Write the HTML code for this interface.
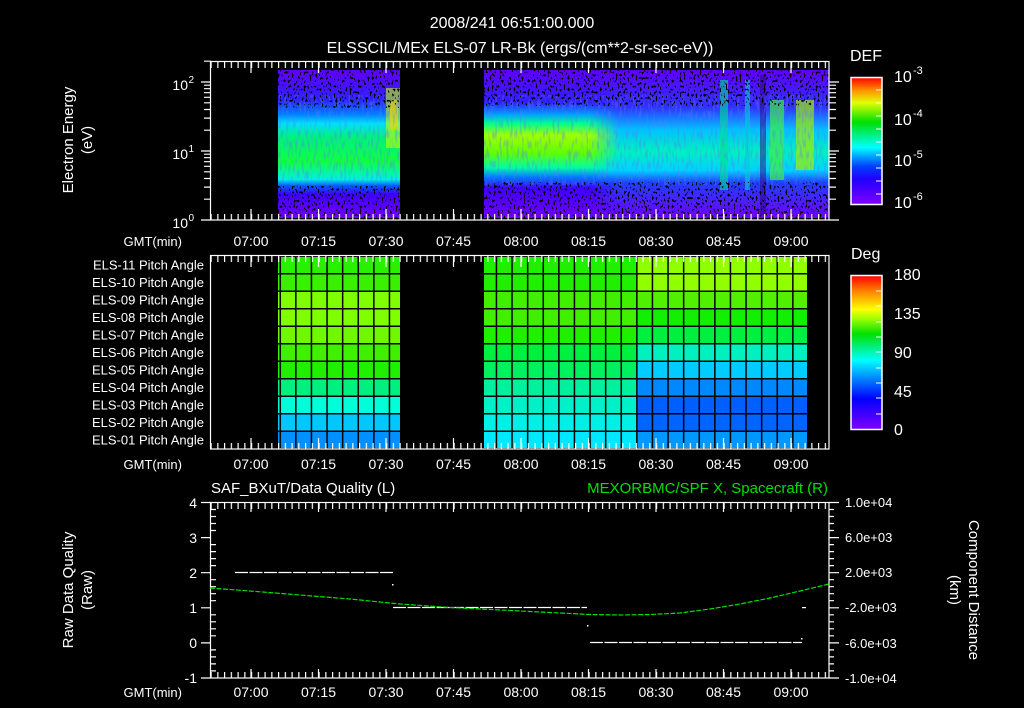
<!DOCTYPE html>
<html><head><meta charset="utf-8"><style>
html,body{margin:0;padding:0;background:#000;width:1024px;height:708px;overflow:hidden}
svg{display:block}
text{font-family:"Liberation Sans",sans-serif;fill:#fff}
</style></head><body>
<svg width="1024" height="708" viewBox="0 0 1024 708" xmlns="http://www.w3.org/2000/svg">
<defs>
<pattern id="tk" x="210.5" y="0" width="6.75" height="708" patternUnits="userSpaceOnUse"><rect x="0" y="0" width="1.2" height="708" fill="#fff"/></pattern>
<pattern id="vgA" x="279.5" y="0" width="15.6" height="708" patternUnits="userSpaceOnUse"><rect x="0" y="0" width="1.5" height="708" fill="#000"/></pattern>
<pattern id="vgB" x="480.1" y="0" width="15.6" height="708" patternUnits="userSpaceOnUse"><rect x="0" y="0" width="1.5" height="708" fill="#000"/></pattern>
<pattern id="hg" x="0" y="255.5" width="10" height="17.5" patternUnits="userSpaceOnUse"><rect x="0" y="0" width="10" height="1.5" fill="#000"/></pattern>
<linearGradient id="cb1" x1="0" y1="1" x2="0" y2="0">
<stop offset="0" stop-color="#8000ff"/><stop offset="0.2" stop-color="#2000ff"/><stop offset="0.3" stop-color="#0040ff"/><stop offset="0.45" stop-color="#00ffff"/><stop offset="0.65" stop-color="#00e000"/><stop offset="0.8" stop-color="#e0ff00"/><stop offset="0.9" stop-color="#ff9000"/><stop offset="1" stop-color="#ff0000"/></linearGradient>
<linearGradient id="cb2" x1="0" y1="1" x2="0" y2="0">
<stop offset="0" stop-color="#8000ff"/><stop offset="0.2" stop-color="#0000ff"/><stop offset="0.45" stop-color="#00ffff"/><stop offset="0.62" stop-color="#00e000"/><stop offset="0.72" stop-color="#a0ff00"/><stop offset="0.78" stop-color="#ffff00"/><stop offset="0.9" stop-color="#ff8000"/><stop offset="1" stop-color="#ff0000"/></linearGradient>
<linearGradient id="sA" x1="0" y1="0" x2="0" y2="1">
<stop offset="0" stop-color="#6000ff"/><stop offset="0.2" stop-color="#3020ff"/><stop offset="0.3" stop-color="#0080ff"/><stop offset="0.36" stop-color="#00e0ff"/><stop offset="0.45" stop-color="#00f080"/><stop offset="0.62" stop-color="#10ff40"/><stop offset="0.74" stop-color="#00f0e0"/><stop offset="0.78" stop-color="#0060ff"/><stop offset="0.84" stop-color="#4000ff"/><stop offset="1" stop-color="#7000ff"/></linearGradient>
<linearGradient id="sB" x1="0" y1="0" x2="0" y2="1">
<stop offset="0" stop-color="#6000ff"/><stop offset="0.22" stop-color="#3020ff"/><stop offset="0.3" stop-color="#00a0ff"/><stop offset="0.36" stop-color="#00ff90"/><stop offset="0.44" stop-color="#a0ff00"/><stop offset="0.56" stop-color="#60ff00"/><stop offset="0.66" stop-color="#00ffa0"/><stop offset="0.72" stop-color="#0080ff"/><stop offset="0.8" stop-color="#4000ff"/><stop offset="1" stop-color="#7000ff"/></linearGradient>
<linearGradient id="sC" x1="0" y1="0" x2="0" y2="1">
<stop offset="0" stop-color="#6000ff"/><stop offset="0.25" stop-color="#3030ff"/><stop offset="0.4" stop-color="#00c0ff"/><stop offset="0.55" stop-color="#00f0c0"/><stop offset="0.68" stop-color="#00d0ff"/><stop offset="0.76" stop-color="#2040ff"/><stop offset="1" stop-color="#7000ff"/></linearGradient>
<linearGradient id="fadeC" x1="0" y1="0" x2="1" y2="0"><stop offset="0" stop-color="#fff" stop-opacity="0"/><stop offset="0.12" stop-color="#fff" stop-opacity="1"/></linearGradient>
<mask id="mC"><rect x="590" y="60" width="239" height="160" fill="url(#fadeC)"/></mask>
<filter id="sp" x="0" y="0" width="1" height="1"><feTurbulence type="fractalNoise" baseFrequency="0.5 0.35" numOctaves="1" seed="5"/><feColorMatrix type="matrix" values="0 0 0 0 0  0 0 0 0 0  0 0 0 0 0  -12 0 0 0 5"/></filter>
<filter id="sp2" x="0" y="0" width="1" height="1"><feTurbulence type="fractalNoise" baseFrequency="0.45 0.1" numOctaves="1" seed="9"/><feColorMatrix type="matrix" values="0 0 0 0 0.1  0 0 0 0 0.2  0 0 0 0 1  -6 0 0 0 3"/></filter>
</defs>

<text x="512" y="28" font-size="16" text-anchor="middle">2008/241 06:51:00.000</text>
<text x="520" y="53" font-size="16" text-anchor="middle">ELSSCIL/MEx ELS-07 LR-Bk  (ergs/(cm**2-sr-sec-eV))</text>

<!-- PANEL 1 spectrogram -->
<rect x="278" y="70" width="122" height="148" fill="url(#sA)"/>
<rect x="386" y="88" width="14" height="60" fill="#c0ff00" opacity="0.6"/>
<rect x="390" y="100" width="8" height="30" fill="#ffd000" opacity="0.6"/>
<rect x="484" y="70" width="345" height="148" fill="url(#sB)"/>
<rect x="590" y="70" width="239" height="148" fill="url(#sC)" mask="url(#mC)"/>
<rect x="720" y="80" width="8" height="110" fill="#00e090" opacity="0.6"/>
<rect x="745" y="80" width="5" height="110" fill="#00d0d0" opacity="0.6"/>
<rect x="770" y="100" width="14" height="80" fill="#40f040" opacity="0.7"/>
<rect x="796" y="100" width="18" height="70" fill="#a0f000" opacity="0.7"/>
<rect x="760" y="75" width="6" height="140" fill="#300080" opacity="0.5"/>
<rect x="278" y="95" width="122" height="90" fill="#000" filter="url(#sp2)" opacity="0.35"/>
<rect x="484" y="95" width="345" height="90" fill="#000" filter="url(#sp2)" opacity="0.35"/>
<rect x="278" y="70" width="122" height="38" fill="#000" filter="url(#sp)"/>
<rect x="278" y="186" width="122" height="32" fill="#000" filter="url(#sp)"/>
<rect x="484" y="70" width="345" height="36" fill="#000" filter="url(#sp)"/>
<rect x="484" y="182" width="345" height="36" fill="#000" filter="url(#sp)"/>

<rect x="210.5" y="61.5" width="618.5" height="158.5" fill="none" stroke="#fff" stroke-width="1.2"/>
<rect x="210.5" y="62" width="618" height="6" fill="url(#tk)"/>
<rect x="210.5" y="214" width="618" height="6" fill="url(#tk)"/>
<g stroke="#fff" stroke-width="1.2">
<path d="M251 62v11M318.5 62v11M386 62v11M453.5 62v11M521 62v11M588.5 62v11M656 62v11M723.5 62v11M791 62v11M251 220v-11M318.5 220v-11M386 220v-11M453.5 220v-11M521 220v-11M588.5 220v-11M656 220v-11M723.5 220v-11M791 220v-11"/>
<path d="M201 220h10M201 151h10M201 82h10M204 199.2h7M204 187.1h7M204 178.5h7M204 171.8h7M204 166.3h7M204 161.7h7M204 157.7h7M204 154.2h7M204 130.2h7M204 118.1h7M204 109.5h7M204 102.8h7M204 97.3h7M204 92.7h7M204 88.7h7M204 85.2h7M204 61.2h7"/>
<path d="M829 220h10M829 151h10M829 82h10M829 199.2h7M829 187.1h7M829 178.5h7M829 171.8h7M829 166.3h7M829 161.7h7M829 157.7h7M829 154.2h7M829 130.2h7M829 118.1h7M829 109.5h7M829 102.8h7M829 97.3h7M829 92.7h7M829 88.7h7M829 85.2h7"/>
</g>
<g font-size="14" text-anchor="end">
<text x="188" y="228">10</text><text x="194" y="221" font-size="10">0</text>
<text x="188" y="159">10</text><text x="194" y="152" font-size="10">1</text>
<text x="188" y="90">10</text><text x="194" y="83" font-size="10">2</text>
</g>
<text transform="translate(73,140) rotate(-90)" font-size="15" text-anchor="middle">Electron Energy</text>
<text transform="translate(92,140) rotate(-90)" font-size="15" text-anchor="middle">(eV)</text>
<g font-size="14" text-anchor="middle">
<text x="251" y="246">07:00</text><text x="318.5" y="246">07:15</text><text x="386" y="246">07:30</text><text x="453.5" y="246">07:45</text><text x="521" y="246">08:00</text><text x="588.5" y="246">08:15</text><text x="656" y="246">08:30</text><text x="723.5" y="246">08:45</text><text x="791" y="246">09:00</text>
</g>
<text x="182" y="246" font-size="13" text-anchor="end">GMT(min)</text>
<text x="850" y="61" font-size="16">DEF</text>
<rect x="851" y="77.5" width="31" height="127" fill="url(#cb1)" stroke="#fff" stroke-width="1.5"/>
<g stroke="#fff" stroke-width="1"><path d="M876 90h6M876 103h6M876 116h6M876 129h6M876 142h6M876 155h6M876 168h6M876 181h6M876 194h6"/></g>
<g font-size="16"><text x="894" y="82">10</text><text x="913" y="74" font-size="11">-3</text>
<text x="894" y="125">10</text><text x="913" y="117" font-size="11">-4</text>
<text x="894" y="166">10</text><text x="913" y="158" font-size="11">-5</text>
<text x="894" y="208">10</text><text x="913" y="200" font-size="11">-6</text></g>

<!-- PANEL 2 -->
<g>
<rect x="278" y="256" width="122" height="17.5" fill="#28f000"/>
<rect x="278" y="273.5" width="122" height="17.5" fill="#38f000"/>
<rect x="278" y="291" width="122" height="17.5" fill="#80ff00"/>
<rect x="278" y="308.5" width="122" height="17.5" fill="#80ff00"/>
<rect x="278" y="326" width="122" height="17.5" fill="#70f800"/>
<rect x="278" y="343.5" width="122" height="17.5" fill="#40f000"/>
<rect x="278" y="361" width="122" height="17.5" fill="#20f000"/>
<rect x="278" y="378.5" width="122" height="17.5" fill="#00f080"/>
<rect x="278" y="396" width="122" height="17.5" fill="#00ffd8"/>
<rect x="278" y="413.5" width="122" height="17.5" fill="#00c8ff"/>
<rect x="278" y="431" width="122" height="18" fill="#0090ff"/>
<rect x="484" y="256" width="153" height="17.5" fill="#20f000"/>
<rect x="484" y="273.5" width="153" height="17.5" fill="#20f000"/>
<rect x="484" y="291" width="153" height="17.5" fill="#40f000"/>
<rect x="484" y="308.5" width="153" height="17.5" fill="#40f000"/>
<rect x="484" y="326" width="153" height="17.5" fill="#20f000"/>
<rect x="484" y="343.5" width="153" height="17.5" fill="#00f040"/>
<rect x="484" y="361" width="153" height="17.5" fill="#00f060"/>
<rect x="484" y="378.5" width="153" height="17.5" fill="#00f0a0"/>
<rect x="484" y="396" width="153" height="17.5" fill="#00f0c8"/>
<rect x="484" y="413.5" width="153" height="17.5" fill="#00f0e8"/>
<rect x="484" y="431" width="153" height="18" fill="#00e8ff"/>
<rect x="637" y="256" width="170" height="17.5" fill="#90ff00"/>
<rect x="637" y="273.5" width="170" height="17.5" fill="#90ff00"/>
<rect x="637" y="291" width="170" height="17.5" fill="#50f000"/>
<rect x="637" y="308.5" width="170" height="17.5" fill="#10f000"/>
<rect x="637" y="326" width="170" height="17.5" fill="#00f040"/>
<rect x="637" y="343.5" width="170" height="17.5" fill="#00f0c0"/>
<rect x="637" y="361" width="170" height="17.5" fill="#00ccff"/>
<rect x="637" y="378.5" width="170" height="17.5" fill="#0088ff"/>
<rect x="637" y="396" width="170" height="17.5" fill="#0060ff"/>
<rect x="637" y="413.5" width="170" height="17.5" fill="#0064ff"/>
<rect x="637" y="431" width="170" height="18" fill="#0098ff"/>
<rect x="278" y="256" width="122" height="193" fill="url(#vgA)"/>
<rect x="484" y="256" width="323" height="193" fill="url(#vgB)"/>
<rect x="278" y="256" width="122" height="193" fill="url(#hg)"/>
<rect x="484" y="256" width="323" height="193" fill="url(#hg)"/>
</g>
<rect x="210.5" y="255.5" width="618.5" height="193.5" fill="none" stroke="#fff" stroke-width="1.2"/>
<rect x="210.5" y="256" width="618" height="6" fill="url(#tk)"/>
<rect x="210.5" y="443" width="618" height="6" fill="url(#tk)"/>
<g stroke="#fff" stroke-width="1.2"><path d="M251 256v11M318.5 256v11M386 256v11M453.5 256v11M521 256v11M588.5 256v11M656 256v11M723.5 256v11M791 256v11M251 449v-11M318.5 449v-11M386 449v-11M453.5 449v-11M521 449v-11M588.5 449v-11M656 449v-11M723.5 449v-11M791 449v-11"/></g>
<g font-size="13" text-anchor="end">
<text x="204" y="269.5">ELS-11 Pitch Angle</text>
<text x="204" y="287">ELS-10 Pitch Angle</text>
<text x="204" y="304.5">ELS-09 Pitch Angle</text>
<text x="204" y="322">ELS-08 Pitch Angle</text>
<text x="204" y="339.5">ELS-07 Pitch Angle</text>
<text x="204" y="357">ELS-06 Pitch Angle</text>
<text x="204" y="374.5">ELS-05 Pitch Angle</text>
<text x="204" y="392">ELS-04 Pitch Angle</text>
<text x="204" y="409.5">ELS-03 Pitch Angle</text>
<text x="204" y="427">ELS-02 Pitch Angle</text>
<text x="204" y="444.5">ELS-01 Pitch Angle</text>
</g>
<g font-size="14" text-anchor="middle">
<text x="251" y="469">07:00</text><text x="318.5" y="469">07:15</text><text x="386" y="469">07:30</text><text x="453.5" y="469">07:45</text><text x="521" y="469">08:00</text><text x="588.5" y="469">08:15</text><text x="656" y="469">08:30</text><text x="723.5" y="469">08:45</text><text x="791" y="469">09:00</text>
</g>
<text x="182" y="469" font-size="13" text-anchor="end">GMT(min)</text>
<text x="851" y="259" font-size="16">Deg</text>
<rect x="851" y="275.5" width="31" height="154" fill="url(#cb2)" stroke="#fff" stroke-width="1.5"/>
<g stroke="#fff" stroke-width="1"><path d="M876 291h6M876 306h6M876 322h6M876 337h6M876 352h6M876 368h6M876 383h6M876 398h6M876 414h6"/></g>
<g font-size="16"><text x="894" y="280">180</text><text x="894" y="319">135</text><text x="894" y="358">90</text><text x="894" y="397">45</text><text x="894" y="435">0</text></g>

<!-- PANEL 3 -->
<text x="211" y="493" font-size="15">SAF_BXuT/Data Quality (L)</text>
<text x="828" y="493" font-size="15" text-anchor="end" style="fill:#00e000">MEXORBMC/SPF X, Spacecraft (R)</text>
<rect x="210.5" y="502.5" width="618.5" height="175.5" fill="none" stroke="#fff" stroke-width="1.2"/>
<rect x="210.5" y="503" width="618" height="6" fill="url(#tk)"/>
<rect x="210.5" y="672" width="618" height="6" fill="url(#tk)"/>
<g stroke="#fff" stroke-width="1.2">
<path d="M251 503v9M318.5 503v9M386 503v9M453.5 503v9M521 503v9M588.5 503v9M656 503v9M723.5 503v9M791 503v9M251 678v-9M318.5 678v-9M386 678v-9M453.5 678v-9M521 678v-9M588.5 678v-9M656 678v-9M723.5 678v-9M791 678v-9"/>
<path d="M201 502.5h10M201 537.6h10M201 572.7h10M201 607.8h10M201 642.9h10M201 678h10M211 509.5h5M211 516.5h5M211 523.5h5M211 530.5h5M211 544.6h5M211 551.6h5M211 558.6h5M211 565.6h5M211 579.7h5M211 586.7h5M211 593.7h5M211 600.7h5M211 614.8h5M211 621.8h5M211 628.8h5M211 635.8h5M211 649.9h5M211 656.9h5M211 663.9h5M211 670.9h5"/>
<path d="M829 502.5h10M829 537.6h10M829 572.7h10M829 607.8h10M829 642.9h10M829 678h10M829 509.5h5M829 516.5h5M829 523.5h5M829 530.5h5M829 544.6h5M829 551.6h5M829 558.6h5M829 565.6h5M829 579.7h5M829 586.7h5M829 593.7h5M829 600.7h5M829 614.8h5M829 621.8h5M829 628.8h5M829 635.8h5M829 649.9h5M829 656.9h5M829 663.9h5M829 670.9h5"/>
</g>
<g stroke="#fff" stroke-width="1.2" fill="none" stroke-dasharray="13 1.5">
<path d="M235 572.5H393"/><path d="M393 607.5H587"/><path d="M590 642.5H802"/>
</g>
<g fill="#fff"><rect x="392" y="584" width="1.5" height="1.5"/><rect x="587" y="625" width="1.5" height="1.5"/><rect x="802" y="607" width="4" height="1.2"/><rect x="801" y="638" width="1.5" height="1.5"/></g>
<polyline fill="none" stroke="#00e000" stroke-width="1.2" stroke-dasharray="5 1.5" points="210,588 250,591 300,595 350,599 400,604 450,607.5 500,610 550,612.5 590,614.5 620,615 650,614.5 680,613 710,609 740,604 770,598 800,591 829,584"/>
<g font-size="14" text-anchor="end"><text x="197" y="508">4</text><text x="197" y="543">3</text><text x="197" y="578">2</text><text x="197" y="613">1</text><text x="197" y="648">0</text><text x="197" y="683">-1</text></g>
<g font-size="13"><text x="845" y="507">1.0e+04</text><text x="845" y="542">6.0e+03</text><text x="845" y="577">2.0e+03</text><text x="845" y="612">-2.0e+03</text><text x="845" y="648">-6.0e+03</text><text x="845" y="683">-1.0e+04</text></g>
<text transform="translate(73,590) rotate(-90)" font-size="15" text-anchor="middle">Raw Data Quality</text>
<text transform="translate(92,590) rotate(-90)" font-size="15" text-anchor="middle">(Raw)</text>
<text transform="translate(969,590) rotate(90)" font-size="15" text-anchor="middle">Component Distance</text>
<text transform="translate(950,590) rotate(90)" font-size="15" text-anchor="middle">(km)</text>
<g font-size="14" text-anchor="middle">
<text x="251" y="697">07:00</text><text x="318.5" y="697">07:15</text><text x="386" y="697">07:30</text><text x="453.5" y="697">07:45</text><text x="521" y="697">08:00</text><text x="588.5" y="697">08:15</text><text x="656" y="697">08:30</text><text x="723.5" y="697">08:45</text><text x="791" y="697">09:00</text>
</g>
<text x="182" y="697" font-size="13" text-anchor="end">GMT(min)</text>
</svg>
</body></html>
